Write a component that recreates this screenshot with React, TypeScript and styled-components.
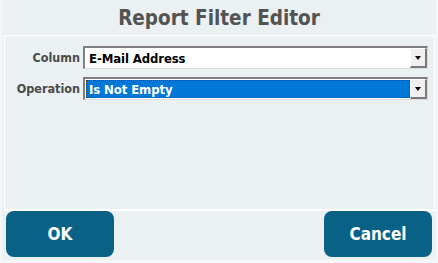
import styled, { createGlobalStyle } from "styled-components"

const GlobalStyle = createGlobalStyle`
  html, body {
    margin: 0;
    padding: 0;
    background: #ebf0f3;
  }
`

const uiFont = `"DejaVu Sans Condensed", "DejaVu Sans", Verdana, sans-serif`

// styles
const Window = styled.div`
  box-sizing: border-box;
  width: 438px;
  height: 263px;
  display: flex;
  flex-direction: column;
  background: #ebf0f3;
  border: 0 solid #f4f6f8;
  border-width: 0 2px 3px 2px;
  font-family: ${uiFont};
  overflow: hidden;
`

const Title = styled.h1`
  margin: 0;
  height: 35px;
  display: flex;
  align-items: center;
  justify-content: center;
  font-size: 20.5px;
  font-weight: bold;
  color: #535353;
`

const Panel = styled.div`
  flex: 1;
  margin: 0 1px 0 2px;
  border: 1px solid #ffffff;
  border-bottom-width: 2px;
  display: grid;
  grid-template-columns: 64px 1fr;
  grid-auto-rows: 23px;
  align-content: start;
  row-gap: 8px;
  column-gap: 3px;
  padding: 10px 6px 0 11px;
`

const Label = styled.label`
  display: flex;
  align-items: center;
  justify-content: flex-end;
  font-size: 12.5px;
  font-weight: bold;
  color: #4a4a4a;
  white-space: nowrap;
`

const Select = styled.div`
  box-sizing: border-box;
  display: flex;
  align-items: stretch;
  border-top: 2px solid #7f7f7f;
  border-left: 2px solid #7f7f7f;
  border-right: 1px solid #dcdcdc;
  border-bottom: 1px solid #dcdcdc;
  background: #ffffff;
`

const Value = styled.div<{ $selected?: boolean }>`
  flex: 1;
  display: flex;
  align-items: center;
  padding-left: 3px;
  margin: 1px 0 1px 1px;
  font-size: 13px;
  font-weight: bold;
  letter-spacing: -0.1px;
  color: ${({ $selected }) => ($selected ? "#ffffff" : "#000000")};
  background: ${({ $selected }) => ($selected ? "#0078d7" : "transparent")};
  outline: ${({ $selected }) => ($selected ? "1px dotted #4a3a1a" : "none")};
  outline-offset: -1px;
`

const DropButton = styled.div`
  box-sizing: border-box;
  width: 17px;
  display: flex;
  align-items: center;
  justify-content: center;
  background: #f0f0f0;
  border-top: 1px solid #ffffff;
  border-left: 1px solid #ffffff;
  border-right: 2px solid #7a7a7a;
  border-bottom: 2px solid #7a7a7a;
`

const Arrow = styled.span`
  width: 0;
  height: 0;
  border-left: 3.5px solid transparent;
  border-right: 3.5px solid transparent;
  border-top: 4px solid #000000;
  margin-top: 1px;
`

const Footer = styled.div`
  display: flex;
  justify-content: space-between;
  padding: 0 4px 3px 4px;
  height: 49px;
  box-sizing: border-box;
`

const ActionButton = styled.button`
  width: 108px;
  height: 46px;
  border: none;
  border-radius: 8px;
  background: #0a6186;
  color: #ffffff;
  font-family: ${uiFont};
  font-size: 17px;
  font-weight: bold;
  cursor: pointer;
`

const DropDown = ({ value, selected }: { value: string; selected?: boolean }) => (
  <Select>
    <Value $selected={selected}>{value}</Value>
    <DropButton>
      <Arrow />
    </DropButton>
  </Select>
)

export default function App() {
  return (
    <>
      <GlobalStyle />
      <Window>
        <Title>Report Filter Editor</Title>
        <Panel>
          <Label>Column</Label>
          <DropDown value="E-Mail Address" />
          <Label>Operation</Label>
          <DropDown value="Is Not Empty" selected />
        </Panel>
        <Footer>
          <ActionButton>OK</ActionButton>
          <ActionButton>Cancel</ActionButton>
        </Footer>
      </Window>
    </>
  )
}
